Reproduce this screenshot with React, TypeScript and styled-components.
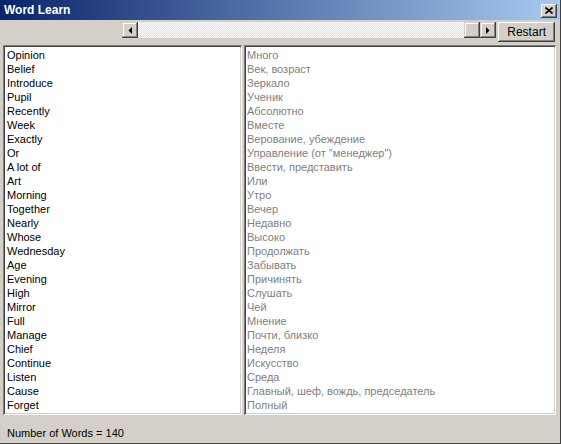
import React from 'react';
import styled, { createGlobalStyle } from 'styled-components';

const GlobalStyle = createGlobalStyle`
  html, body {
    margin: 0;
    padding: 0;
    background: #d4d0c8;
  }
  * {
    box-sizing: border-box;
  }
`;

const english = [
  'Opinion', 'Belief', 'Introduce', 'Pupil', 'Recently', 'Week', 'Exactly', 'Or',
  'A lot of', 'Art', 'Morning', 'Together', 'Nearly', 'Whose', 'Wednesday', 'Age',
  'Evening', 'High', 'Mirror', 'Full', 'Manage', 'Chief', 'Continue', 'Listen',
  'Cause', 'Forget',
];

const russian = [
  'Много', 'Век, возраст', 'Зеркало', 'Ученик', 'Абсолютно', 'Вместе',
  'Верование, убеждение', 'Управление (от "менеджер")', 'Ввести, представить',
  'Или', 'Утро', 'Вечер', 'Недавно', 'Высоко', 'Продолжать', 'Забывать',
  'Причинять', 'Слушать', 'Чей', 'Мнение', 'Почти, близко', 'Неделя',
  'Искусство', 'Среда', 'Главный, шеф, вождь, председатель', 'Полный',
];

const Window = styled.div`
  width: 561px;
  height: 444px;
  display: flex;
  flex-direction: column;
  background: #d4d0c8;
  border-right: 1px solid #404040;
  border-bottom: 1px solid #404040;
  font-family: 'Liberation Sans', Arial, sans-serif;
  font-size: 11px;
  overflow: hidden;
`;

const TitleBar = styled.div`
  height: 20px;
  flex-shrink: 0;
  display: flex;
  align-items: center;
  justify-content: space-between;
  padding: 0 3px 0 4px;
  background: linear-gradient(to right, #0a246a, #a6caf0);
`;

const Title = styled.span`
  color: #ffffff;
  font-weight: bold;
  font-size: 12px;
`;

const CloseButton = styled.div`
  width: 16px;
  height: 14px;
  margin-top: 1px;
  background: #d4d0c8;
  box-shadow: inset -1px -1px #404040, inset 1px 1px #ffffff,
    inset -2px -2px #808080, inset 2px 2px #d4d0c8;
  display: flex;
  align-items: center;
  justify-content: center;
`;

const Toolbar = styled.div`
  height: 25px;
  flex-shrink: 0;
  display: flex;
  align-items: flex-start;
  padding: 1px 5px 0 122px;
`;

const ScrollBar = styled.div`
  height: 16px;
  width: 376px;
  display: flex;
  margin-top: 1px;
`;

const ScrollButton = styled.div`
  width: 16px;
  height: 16px;
  flex-shrink: 0;
  background: #d4d0c8;
  box-shadow: inset -1px -1px #404040, inset 1px 1px #d4d0c8,
    inset -2px -2px #808080, inset 2px 2px #ffffff;
  display: flex;
  align-items: center;
  justify-content: center;
`;

const Track = styled.div`
  flex: 1;
  background-color: #ffffff;
  background-image: linear-gradient(45deg, #e4e1da 25%, transparent 25%, transparent 75%, #e4e1da 75%),
    linear-gradient(45deg, #e4e1da 25%, transparent 25%, transparent 75%, #e4e1da 75%);
  background-size: 2px 2px;
  background-position: 0 0, 1px 1px;
`;

const Button = styled.div`
  margin-left: 2px;
  width: 57px;
  height: 20px;
  margin-top: 1px;
  display: flex;
  align-items: center;
  justify-content: center;
  font-size: 12px;
  color: #000000;
  background: #d4d0c8;
  box-shadow: inset -1px -1px #404040, inset 1px 1px #ffffff,
    inset -2px -2px #808080, inset 2px 2px #d4d0c8;
`;

const Panels = styled.div`
  flex: 1;
  display: flex;
  gap: 2px;
  padding: 0 4px 0 3px;
  min-height: 0;
`;

const ListBox = styled.div<{ $width: number; $indent: number }>`
  width: ${p => p.$width}px;
  flex-shrink: 0;
  background: #ffffff;
  padding: 3px 2px 3px ${p => p.$indent}px;
  box-shadow: inset 1px 1px #808080, inset -1px -1px #ffffff,
    inset 2px 2px #404040, inset -2px -2px #d4d0c8;
  overflow: hidden;
`;

const Item = styled.div<{ $muted?: boolean }>`
  height: 14px;
  line-height: 14px;
  white-space: nowrap;
  color: ${p => (p.$muted ? '#808080' : '#000000')};
`;

const StatusBar = styled.div`
  height: 28px;
  flex-shrink: 0;
  display: flex;
  align-items: center;
  padding: 7px 0 0 7px;
  font-size: 11px;
  color: #000000;
`;

const Arrow = ({ dir }: { dir: 'left' | 'right' }) => (
  <svg width="4" height="7" viewBox="0 0 4 7">
    {dir === 'left' ? (
      <polygon points="4,0 4,7 0.5,3.5" fill="#000" />
    ) : (
      <polygon points="0,0 0,7 3.5,3.5" fill="#000" />
    )}
  </svg>
);

const App: React.FC = () => {
  return (
    <>
      <GlobalStyle />
      <Window>
        <TitleBar>
          <Title>Word Learn</Title>
          <CloseButton>
            <svg width="8" height="7" viewBox="0 0 8 7">
              <path d="M0.5 0.5 L7.5 6.5 M7.5 0.5 L0.5 6.5" stroke="#000" strokeWidth="1.6" />
            </svg>
          </CloseButton>
        </TitleBar>
        <Toolbar>
          <ScrollBar>
            <ScrollButton>
              <Arrow dir="left" />
            </ScrollButton>
            <Track />
            <ScrollButton />
            <ScrollButton>
              <Arrow dir="right" />
            </ScrollButton>
          </ScrollBar>
          <Button>Restart</Button>
        </Toolbar>
        <Panels>
          <ListBox $width={239} $indent={4}>
            {english.map(w => (
              <Item key={w}>{w}</Item>
            ))}
          </ListBox>
          <ListBox $width={312} $indent={3}>
            {russian.map(w => (
              <Item key={w} $muted>
                {w}
              </Item>
            ))}
          </ListBox>
        </Panels>
        <StatusBar>Number of Words = 140</StatusBar>
      </Window>
    </>
  );
};

export default App;
